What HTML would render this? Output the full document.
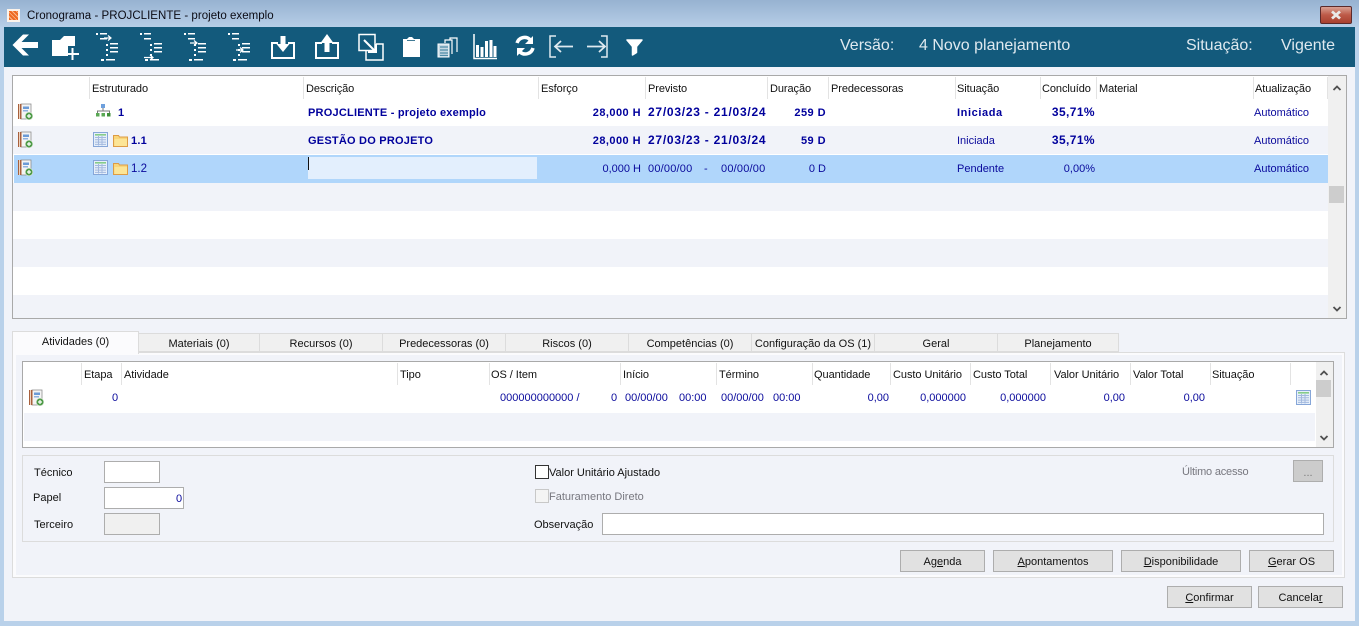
<!DOCTYPE html>
<html><head><meta charset="utf-8"><style>
html,body{margin:0;padding:0;width:1359px;height:626px;overflow:hidden;background:#b9d1ea}
body{position:relative;font:11px "Liberation Sans",sans-serif;color:#111}
div,span,svg{position:absolute;box-sizing:border-box}
.t{white-space:nowrap;line-height:14px;height:14px}
.h{white-space:nowrap;line-height:14px;height:14px;top:82px;color:#111;letter-spacing:-.08px}
.hh{white-space:nowrap;line-height:14px;height:14px;top:368px;color:#111;letter-spacing:-.05px}
.v{width:1px;background:#e3e3e3}
.b{color:#00009c;font-weight:bold;letter-spacing:.22px}
.x{letter-spacing:.45px}
.d{font-size:12px;letter-spacing:.75px}
.p{font-size:12px;letter-spacing:.4px}
.n{color:#0a0a9c}
.r{text-align:right;width:120px}
.tab{top:333px;height:19px;background:#f0f0f0;border:1px solid #dcdcdc;border-left:0;text-align:center;line-height:20px;color:#111;white-space:nowrap}
.btn{background:#e1e1e1;border:1px solid #adadad;height:22px;text-align:center;line-height:22px;color:#111;white-space:nowrap}
.tb{color:#dfe9ef;font-size:16px;height:18px;line-height:18px;top:37px;white-space:nowrap}
u{text-decoration:underline}
.inp{background:#fff;border:1px solid #adadad}
</style></head><body>
<svg width="0" height="0" style="left:0;top:0"><defs>
<symbol id="doc" viewBox="0 0 16 17"><rect x="4" y="1" width="10" height="15" fill="#f4f4f4" stroke="#8f8f8f" stroke-width=".8"/><rect x="1" y="1" width="3.500" height="15" fill="#a8603c"/><rect x="2" y="1" width="1" height="15" fill="#ecd2bf"/><rect x="6" y="3.500" width="6" height="2.500" fill="#6c9bd6"/><rect x="6" y="7" width="5" height="1.500" fill="#8fb2e0"/><circle cx="12" cy="13" r="3.800" fill="#4e9a47" stroke="#dfeadd" stroke-width=".6"/><path d="M12 11v4M10 13h4" stroke="#fff" stroke-width="1.200"/></symbol>
<symbol id="tbl" viewBox="0 0 15 15"><rect x=".5" y=".5" width="14" height="14" fill="#e6effa" stroke="#86a6d8"/><rect x="2" y="2" width="11" height="1.600" fill="#86cc89"/><path d="M2 5.500h11M2 7.800h11M2 10.100h11M2 12.400h11M5.500 4v9.500M9 4v9.500" stroke="#a3b9de" stroke-width="1"/></symbol>
<symbol id="fol" viewBox="0 0 15 13"><path d="M.5 12.500V1.500h5l1 1.500h8v9.500z" fill="#f9d67a" stroke="#dd9c45"/><path d="M1.500 5h12.500v7h-12.500z" fill="#fce596"/></symbol>
<symbol id="lst" viewBox="0 0 26 30"><g fill="#fff"><rect x="1" y="1" width="2" height="2"/><rect x="5" y="1" width="7" height="1.500"/><rect x="5" y="6" width="7" height="1.500"/><rect x="11" y="12" width="2" height="2"/><rect x="15" y="11" width="8" height="1.500"/><rect x="11" y="17" width="2" height="2"/><rect x="15" y="15" width="8" height="1.500"/><rect x="15" y="19" width="8" height="1.500"/><rect x="11" y="22" width="2" height="2"/><rect x="6" y="27" width="3" height="2"/><rect x="11" y="27" width="9" height="1.500"/></g></symbol>
</defs></svg>

<!-- title bar -->
<div style="left:0;top:0;width:1359px;height:27px;background:linear-gradient(#97b2d1,#b6cee7)"></div>
<div style="left:7px;top:9px;width:13px;height:13px;background:#fbf3ea"></div>
<div style="left:9px;top:11px;width:9px;height:9px;background:repeating-linear-gradient(45deg,#ee6a22 0 2px,#f9b98c 2px 3px)"></div>
<div class="t" style="left:27px;top:9px;color:#0b0b14;font-size:11.500px;letter-spacing:.03px">Cronograma - PROJCLIENTE - projeto exemplo</div>
<div style="left:1320px;top:6px;width:32px;height:18px;border:1px solid #5b2a2a;border-radius:2px;background:linear-gradient(#d9a194,#bd5a47 50%,#a8402f)"></div>
<svg style="left:1320px;top:6px" width="32" height="18"><path d="M12 5.500l8 7M20 5.500l-8 7" stroke="#e9e9e9" stroke-width="2.800"/></svg>

<!-- client -->
<div style="left:4px;top:27px;width:1351px;height:594px;background:#f1f3f9"></div>
<div style="left:4px;top:27px;width:1351px;height:40px;background:#135a7c"></div>

<!-- toolbar icons -->
<svg style="left:4px;top:27px" width="680" height="40" fill="none" stroke="#fff">
<path d="M8.500 18L19 7.500h6L17.500 15H34v6H17.500L25 28.500h-6z" fill="#fff" stroke="none"/>
<path d="M48 13h8l4-4h11v10h-7v10H48z" fill="#fff" stroke="none"/>
<path d="M68.500 21v12M62 27h13" stroke-width="2"/>
<use href="#lst" x="91" y="5" width="26" height="30" stroke="none"/>
<path d="M100 11h6M104 8.500l3 2.500-3 2.500" stroke-width="1.200"/>
<use href="#lst" x="135" y="5" width="26" height="30" stroke="none"/>
<path d="M140 30.500h9M146 28l3 2.500-3 2.500" stroke-width="1.200"/>
<use href="#lst" x="179" y="5" width="26" height="30" stroke="none"/>
<path d="M186 16h7M190 13.500l3 2.500-3 2.500" stroke-width="1.200"/>
<use href="#lst" x="223" y="5" width="26" height="30" stroke="none"/>
<path d="M232 23h7M236 20.500l3 2.500-3 2.500" stroke-width="1.200"/>
<path d="M274 16h-6v15h22V16h-6" stroke-width="2"/><path d="M276.500 9h5v8h4l-6.500 8-6.500-8h4z" fill="#fff" stroke="none"/>
<path d="M318 16h-6v15h22V16h-6" stroke-width="2"/><path d="M320.500 25h5v-9h4L323 7l-6.500 9h4z" fill="#fff" stroke="none"/>
<path d="M355 8h16v16h-16z" stroke-width="1.500" transform="translate(0,-.5)"/><path d="M372 17h7v16h-17v-9" stroke-width="1.500"/>
<path d="M360 13l11 11M372 17v8h-8" stroke-width="2"/>
<path d="M399 12h4l2-2h3l2 2h6v18h-17z" fill="#fff" stroke="none"/><path d="M403 13.500h8" stroke="#135a7c" stroke-width=".8"/>
<path d="M434 18v-1h11v13h-11z" fill="#c5d8e3" stroke="#fff"/><path d="M436 20h8M436 23h8M436 26h8M436 28.500h8" stroke="#4d8aa6" stroke-width="1.200"/><path d="M441 16v-3h7v14M446 13v-2h7v14" stroke-width="1.200"/>
<path d="M470 7v24.500h23" stroke-width="1.500"/><path d="M473.500 18v12M478 20v10M482.500 14v16M487 13v17M491 19v11" stroke-width="3"/>
<path d="M513 16a8 8 0 0 1 13-3.500M529 21a8 8 0 0 1-13 4" stroke-width="3.500"/><path d="M529 9v8h-8zM513 29v-8h8z" fill="#fff" stroke="none"/>
<path d="M552 9h-6v21h6" stroke="#dfeaf0" stroke-width="1.500"/><path d="M569 19.500h-17M557 14l-6 5.500 6 5.500" stroke="#dfeaf0" stroke-width="1.800"/>
<path d="M597 9h6v21h-6" stroke="#dfeaf0" stroke-width="1.500"/><path d="M583 19.500h18M595 14l6 5.500-6 5.500" stroke="#dfeaf0" stroke-width="1.800"/>
<path d="M623 13h15l-5.500 6.500v6l-4 2.500v-8.500z" fill="#fff" stroke="#fff" stroke-width="1.500" stroke-linejoin="round"/>
</svg>
<div class="tb" style="left:840px">Versão:</div>
<div class="tb" style="left:919px">4 Novo planejamento</div>
<div class="tb" style="left:1186px">Situação:</div>
<div class="tb" style="left:1281px">Vigente</div>

<!-- main grid -->
<div style="left:12px;top:75px;width:1335px;height:244px;background:#fff;border:1px solid #a9a9a9"></div>
<div style="left:13px;top:126px;width:1315px;height:28px;background:#f1f3f9"></div>
<div style="left:14px;top:155px;width:1314px;height:28px;background:#b0d6fb"></div>
<div style="left:13px;top:183px;width:1315px;height:28px;background:#f1f3f9"></div>
<div style="left:13px;top:239px;width:1315px;height:28px;background:#f1f3f9"></div>
<div style="left:13px;top:295px;width:1315px;height:23px;background:#f1f3f9"></div>
<div style="left:308px;top:157px;width:229px;height:22px;background:#e3effd"></div>
<div style="left:308px;top:157px;width:1px;height:13px;background:#111"></div>

<div class="v" style="left:89px;top:77px;height:22px"></div>
<div class="v" style="left:303px;top:77px;height:22px"></div>
<div class="v" style="left:538px;top:77px;height:22px"></div>
<div class="v" style="left:645px;top:77px;height:22px"></div>
<div class="v" style="left:767px;top:77px;height:22px"></div>
<div class="v" style="left:828px;top:77px;height:22px"></div>
<div class="v" style="left:955px;top:77px;height:22px"></div>
<div class="v" style="left:1040px;top:77px;height:22px"></div>
<div class="v" style="left:1096px;top:77px;height:22px"></div>
<div class="v" style="left:1253px;top:77px;height:22px"></div>
<div class="v" style="left:1327px;top:77px;height:22px"></div>

<div class="h" style="left:92px">Estruturado</div>
<div class="h" style="left:306px">Descrição</div>
<div class="h" style="left:541px">Esforço</div>
<div class="h" style="left:648px">Previsto</div>
<div class="h" style="left:770px">Duração</div>
<div class="h" style="left:831px">Predecessoras</div>
<div class="h" style="left:957px">Situação</div>
<div class="h" style="left:1042px">Concluído</div>
<div class="h" style="left:1099px">Material</div>
<div class="h" style="left:1255px">Atualização</div>

<!-- rows -->
<svg style="left:17px;top:103px" width="16" height="17"><use href="#doc"/></svg>
<svg style="left:17px;top:131px" width="16" height="17"><use href="#doc"/></svg>
<svg style="left:17px;top:159px" width="16" height="17"><use href="#doc"/></svg>
<svg style="left:95px;top:103px" width="18" height="15"><rect x="6" y="1" width="4" height="4" fill="#6ea0dd"/><path d="M8 5v3M2.500 10V8h12v2" stroke="#777" fill="none"/><rect x="1" y="10" width="3.500" height="3.500" fill="#5aa854"/><rect x="6.500" y="10" width="3.500" height="3.500" fill="#5aa854"/><rect x="12" y="10" width="3.500" height="3.500" fill="#3f8f3a"/></svg>
<svg style="left:93px;top:132px" width="15" height="15"><use href="#tbl"/></svg>
<svg style="left:93px;top:160px" width="15" height="15"><use href="#tbl"/></svg>
<svg style="left:113px;top:134px" width="15" height="13"><use href="#fol"/></svg>
<svg style="left:113px;top:162px" width="15" height="13"><use href="#fol"/></svg>

<div class="t b" style="left:118px;top:106px">1</div>
<div class="t b" style="left:131px;top:134px">1.1</div>
<div class="t n" style="left:131px;top:162px;font-size:11.500px">1.2</div>
<div class="t b" style="left:308px;top:106px">PROJCLIENTE - projeto exemplo</div>
<div class="t b" style="left:308px;top:134px">GESTÃO DO PROJETO</div>

<div class="t b x r" style="left:521px;top:106px">28,000 H</div>
<div class="t b x r" style="left:521px;top:134px">28,000 H</div>
<div class="t n r" style="left:521px;top:162px">0,000 H</div>
<div class="t b d" style="left:648px;top:105px">27/03/23 - 21/03/24</div>
<div class="t b d" style="left:648px;top:133px">27/03/23 - 21/03/24</div>
<div class="t n" style="left:648px;top:162px;letter-spacing:.2px">00/00/00</div>
<div class="t n" style="left:704px;top:162px">-</div>
<div class="t n" style="left:721px;top:162px;letter-spacing:.2px">00/00/00</div>
<div class="t b x r" style="left:706px;top:106px">259 D</div>
<div class="t b x r" style="left:706px;top:134px">59 D</div>
<div class="t n r" style="left:706px;top:162px">0 D</div>
<div class="t b" style="left:957px;top:106px;letter-spacing:.6px">Iniciada</div>
<div class="t n" style="left:957px;top:134px">Iniciada</div>
<div class="t n" style="left:957px;top:162px">Pendente</div>
<div class="t b p r" style="left:975px;top:105px">35,71%</div>
<div class="t b p r" style="left:975px;top:133px">35,71%</div>
<div class="t n r" style="left:975px;top:162px">0,00%</div>
<div class="t n" style="left:1254px;top:106px">Automático</div>
<div class="t n" style="left:1254px;top:134px">Automático</div>
<div class="t n" style="left:1254px;top:162px">Automático</div>

<!-- main scrollbar -->
<div style="left:1328px;top:76px;width:18px;height:242px;background:#f0f0f0"></div>
<div style="left:1329px;top:186px;width:15px;height:17px;background:#cdcdcd"></div>
<svg style="left:1328px;top:76px" width="18" height="242" fill="none" stroke="#505050" stroke-width="1.800"><path d="M5.500 14l3.500-3.500 3.500 3.500M5.500 231l3.500 3.500 3.500-3.500"/></svg>

<!-- tabs -->
<div style="left:12px;top:352px;width:1333px;height:226px;background:#fbfbfd;border:1px solid #dcdcdc"></div>
<div style="left:16px;top:355px;width:1326px;height:220px;background:#f1f3f9"></div>
<div style="left:12px;top:331px;width:127px;height:23px;background:#fbfbfd;border:1px solid #dcdcdc;border-bottom:0;text-align:center;line-height:20px;color:#111">Atividades (0)</div>
<div class="tab" style="left:139px;width:121px">Materiais (0)</div>
<div class="tab" style="left:260px;width:123px">Recursos (0)</div>
<div class="tab" style="left:383px;width:123px">Predecessoras (0)</div>
<div class="tab" style="left:506px;width:123px">Riscos (0)</div>
<div class="tab" style="left:629px;width:123px">Competências (0)</div>
<div class="tab" style="left:752px;width:123px">Configuração da OS (1)</div>
<div class="tab" style="left:875px;width:123px">Geral</div>
<div class="tab" style="left:998px;width:121px">Planejamento</div>

<!-- inner grid -->
<div style="left:22px;top:361px;width:1312px;height:87px;background:#fff;border:1px solid #a9a9a9"></div>
<div style="left:24px;top:413px;width:1291px;height:28px;background:#f1f3f9"></div>
<div class="v" style="left:81px;top:363px;height:22px"></div>
<div class="v" style="left:121px;top:363px;height:22px"></div>
<div class="v" style="left:397px;top:363px;height:22px"></div>
<div class="v" style="left:489px;top:363px;height:22px"></div>
<div class="v" style="left:620px;top:363px;height:22px"></div>
<div class="v" style="left:716px;top:363px;height:22px"></div>
<div class="v" style="left:812px;top:363px;height:22px"></div>
<div class="v" style="left:890px;top:363px;height:22px"></div>
<div class="v" style="left:970px;top:363px;height:22px"></div>
<div class="v" style="left:1050px;top:363px;height:22px"></div>
<div class="v" style="left:1130px;top:363px;height:22px"></div>
<div class="v" style="left:1210px;top:363px;height:22px"></div>
<div class="v" style="left:1290px;top:363px;height:22px"></div>

<div class="hh" style="left:84px">Etapa</div>
<div class="hh" style="left:124px">Atividade</div>
<div class="hh" style="left:400px">Tipo</div>
<div class="hh" style="left:491px">OS / Item</div>
<div class="hh" style="left:623px">Início</div>
<div class="hh" style="left:719px">Término</div>
<div class="hh" style="left:814px">Quantidade</div>
<div class="hh" style="left:893px">Custo Unitário</div>
<div class="hh" style="left:973px">Custo Total</div>
<div class="hh" style="left:1054px">Valor Unitário</div>
<div class="hh" style="left:1133px">Valor Total</div>
<div class="hh" style="left:1212px">Situação</div>

<svg style="left:28px;top:389px" width="16" height="17"><use href="#doc"/></svg>
<div class="t n" style="left:112px;top:391px">0</div>
<div class="t n" style="left:500px;top:391px">000000000000 /</div>
<div class="t n" style="left:611px;top:391px">0</div>
<div class="t n" style="left:625px;top:391px">00/00/00</div>
<div class="t n" style="left:679px;top:391px">00:00</div>
<div class="t n" style="left:721px;top:391px">00/00/00</div>
<div class="t n" style="left:773px;top:391px">00:00</div>
<div class="t n r" style="left:769px;top:391px">0,00</div>
<div class="t n r" style="left:846px;top:391px">0,000000</div>
<div class="t n r" style="left:926px;top:391px">0,000000</div>
<div class="t n r" style="left:1005px;top:391px">0,00</div>
<div class="t n r" style="left:1085px;top:391px">0,00</div>
<svg style="left:1296px;top:390px" width="15" height="15"><use href="#tbl"/></svg>
<div style="left:1316px;top:362px;width:17px;height:85px;background:#f0f0f0"></div>
<div style="left:1316px;top:380px;width:15px;height:17px;background:#cdcdcd"></div>
<svg style="left:1316px;top:362px" width="17" height="85" fill="none" stroke="#505050" stroke-width="1.800"><path d="M4.500 13l3.500-3.500 3.500 3.500M4.500 74l3.500 3.500 3.500-3.500"/></svg>

<!-- form -->
<div style="left:22px;top:455px;width:1312px;height:87px;border:1px solid #dcdcdc"></div>
<div class="t" style="left:34px;top:466px">Técnico</div>
<div class="t" style="left:33px;top:491px">Papel</div>
<div class="t" style="left:34px;top:518px">Terceiro</div>
<div class="inp" style="left:104px;top:461px;width:56px;height:22px"></div>
<div class="inp" style="left:104px;top:487px;width:80px;height:22px"></div>
<div class="t n" style="left:176px;top:492px">0</div>
<div class="inp" style="left:104px;top:513px;width:56px;height:22px;background:#f0f0f0"></div>
<div style="left:535px;top:465px;width:14px;height:14px;background:#fff;border:1px solid #333"></div>
<div class="t" style="left:549px;top:466px;color:#111">Valor Unitário Ajustado</div>
<div style="left:535px;top:489px;width:14px;height:14px;background:#f4f4f4;border:1px solid #c8c8c8"></div>
<div class="t" style="left:549px;top:490px;color:#77777f">Faturamento Direto</div>
<div class="t" style="left:534px;top:518px;color:#111">Observação</div>
<div class="inp" style="left:602px;top:513px;width:722px;height:22px"></div>
<div class="t" style="left:1182px;top:465px;color:#77777f;letter-spacing:-.2px">Último acesso</div>
<div style="left:1293px;top:460px;width:30px;height:22px;background:#cccccc;border:1px solid #adadad;text-align:center;line-height:24px;color:#7a7a7a">...</div>

<!-- buttons -->
<div class="btn" style="left:900px;top:550px;width:85px">Ag<u>e</u>nda</div>
<div class="btn" style="left:993px;top:550px;width:120px"><u>A</u>pontamentos</div>
<div class="btn" style="left:1121px;top:550px;width:120px"><u>D</u>isponibilidade</div>
<div class="btn" style="left:1249px;top:550px;width:85px"><u>G</u>erar OS</div>
<div class="btn" style="left:1167px;top:586px;width:85px"><u>C</u>onfirmar</div>
<div class="btn" style="left:1258px;top:586px;width:85px">Cancela<u>r</u></div>
</body></html>
